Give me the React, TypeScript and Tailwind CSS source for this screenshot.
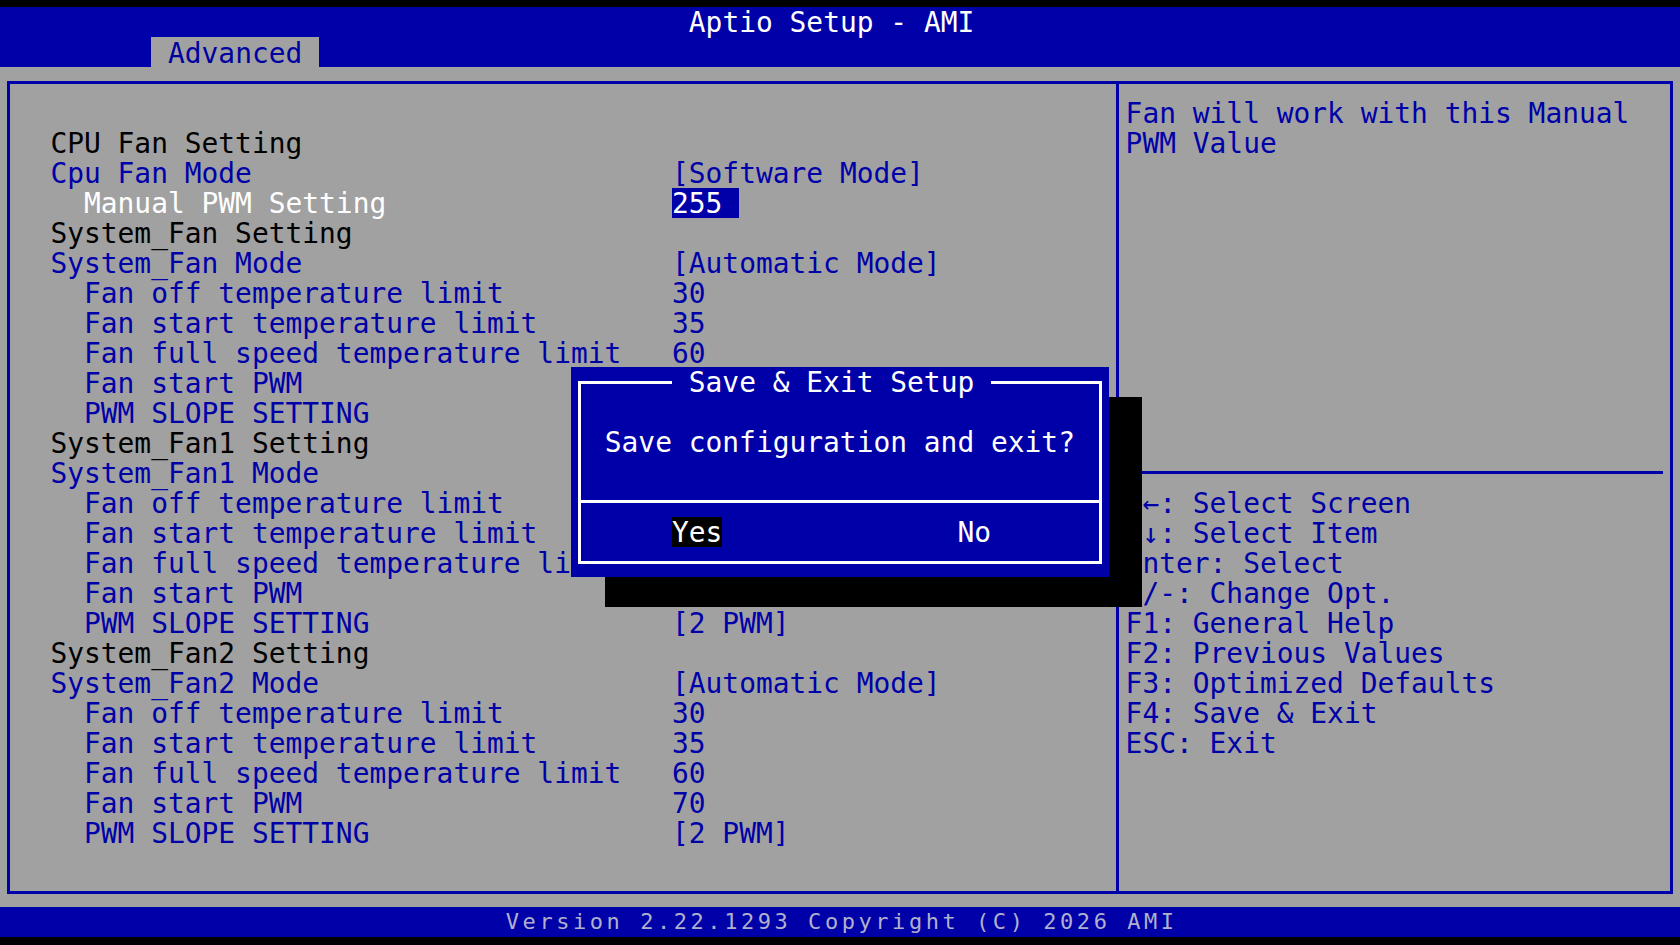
import React from 'react';

type RowKind = 'head' | 'item' | 'sub' | 'active';

interface MenuRow {
  label: string;
  kind: RowKind;
  value?: string;
}

const fanGroup = (name: string): MenuRow[] => [
  { label: `${name} Setting`, kind: 'head' },
  { label: `${name} Mode`, kind: 'item', value: '[Automatic Mode]' },
  { label: 'Fan off temperature limit', kind: 'sub', value: '30' },
  { label: 'Fan start temperature limit', kind: 'sub', value: '35' },
  { label: 'Fan full speed temperature limit', kind: 'sub', value: '60' },
  { label: 'Fan start PWM', kind: 'sub', value: '70' },
  { label: 'PWM SLOPE SETTING', kind: 'sub', value: '[2 PWM]' },
];

const menuRows: MenuRow[] = [
  { label: 'CPU Fan Setting', kind: 'head' },
  { label: 'Cpu Fan Mode', kind: 'item', value: '[Software Mode]' },
  { label: 'Manual PWM Setting', kind: 'active', value: '255' },
  ...fanGroup('System_Fan'),
  ...fanGroup('System_Fan1'),
  ...fanGroup('System_Fan2'),
];

const keyHelp = [
  '→←: Select Screen',
  '↑↓: Select Item',
  'Enter: Select',
  '+/-: Change Opt.',
  'F1: General Help',
  'F2: Previous Values',
  'F3: Optimized Defaults',
  'F4: Save & Exit',
  'ESC: Exit',
];

const MenuLine: React.FC<{ row: MenuRow }> = ({ row }) => {
  const labelColor =
    row.kind === 'head' ? 'text-black' : row.kind === 'active' ? 'text-white' : 'text-[#0000a8]';
  const indent = row.kind === 'sub' || row.kind === 'active' ? 'pl-[33.6px]' : '';

  return (
    <div className="flex h-[30px]">
      <span className={`w-[621.6px] shrink-0 whitespace-pre ${indent} ${labelColor}`}>{row.label}</span>
      {row.value &&
        (row.kind === 'active' ? (
          <span className="-mt-[1px] h-[30px] w-[67.2px] whitespace-pre bg-[#0000a8] pt-[1px] text-white">
            {row.value}
          </span>
        ) : (
          <span className="whitespace-pre text-[#0000a8]">{row.value}</span>
        ))}
    </div>
  );
};

const SaveDialog: React.FC = () => (
  <>
    {/* drop shadow, one row down and two columns right */}
    <div className="absolute left-[604.8px] top-[397px] h-[210px] w-[537.6px] bg-black" />
    <div className="absolute left-[571.2px] top-[367px] h-[210px] w-[537.6px] bg-[#0000a8] pb-[13px] pl-[7px] pr-[6.6px] pt-[14px] text-white">
      <div className="relative flex h-full flex-col border-[3px] border-white">
        <span className="absolute left-[90.8px] top-[-17px] h-[30px] whitespace-pre bg-[#0000a8] pt-[1px]">
          {' Save & Exit Setup '}
        </span>
        <div className="mt-[43px] h-[30px] whitespace-pre pl-[23.6px] pt-[1px]">Save configuration and exit?</div>
        <div className="mt-[43px] h-[3px] bg-white" />
        <div className="mt-[14px] flex h-[30px]">
          <span className="ml-[90.8px] w-[50.4px] bg-black pt-[1px]">Yes</span>
          <span className="ml-[235.2px] pt-[1px]">No</span>
        </div>
      </div>
    </div>
  </>
);

export default function App() {
  return (
    <div className="relative h-[945px] w-[1680px] overflow-hidden bg-black font-['DejaVu_Sans_Mono',monospace] text-[27.9px] leading-[30px]">
      <div className="h-[7px]" />

      <header className="h-[60px] bg-[#0000a8]">
        <div className="h-[30px] whitespace-pre pl-[688.8px] pt-[1px] text-white">Aptio Setup - AMI</div>
        <div className="flex h-[30px]">
          <div className="ml-[151.2px] w-[168px] bg-[#a1a1a1] pl-[16.8px] pt-[2px] text-[#0000a0]">Advanced</div>
        </div>
      </header>

      <main className="h-[840px] bg-[#a1a1a1] px-[7px] pb-[13px] pt-[14px]">
        <div className="flex h-full border-[3px] border-[#0000a8]">
          <section className="w-[1106px] shrink-0 pl-[40.4px] pt-[45px]">
            {menuRows.map((row, i) => (
              <MenuLine key={i} row={row} />
            ))}
          </section>

          <div className="w-[3px] shrink-0 bg-[#0000a8]" />

          <aside className="flex-1 pt-[15px] text-[#0000a8]">
            <div className="h-[60px] whitespace-pre pl-[6.6px]">
              <div>Fan will work with this Manual</div>
              <div>PWM Value</div>
            </div>
            <div className="h-[298px]" />
            <div className="flex h-[30px] items-center pr-[7px]">
              <div className="h-[3px] w-full bg-[#0000a8]" />
            </div>
            <div className="pl-[6.6px] pt-[2px]">
              {keyHelp.map((line) => (
                <div key={line} className="h-[30px] whitespace-pre">
                  {line}
                </div>
              ))}
            </div>
          </aside>
        </div>
      </main>

      <footer className="h-[30px] bg-[#0000a8] pl-[505.8px] text-[22px] tracking-[3.55px] text-[#b0b0cc]">
        Version 2.22.1293 Copyright (C) 2026 AMI
      </footer>

      <SaveDialog />
    </div>
  );
}
